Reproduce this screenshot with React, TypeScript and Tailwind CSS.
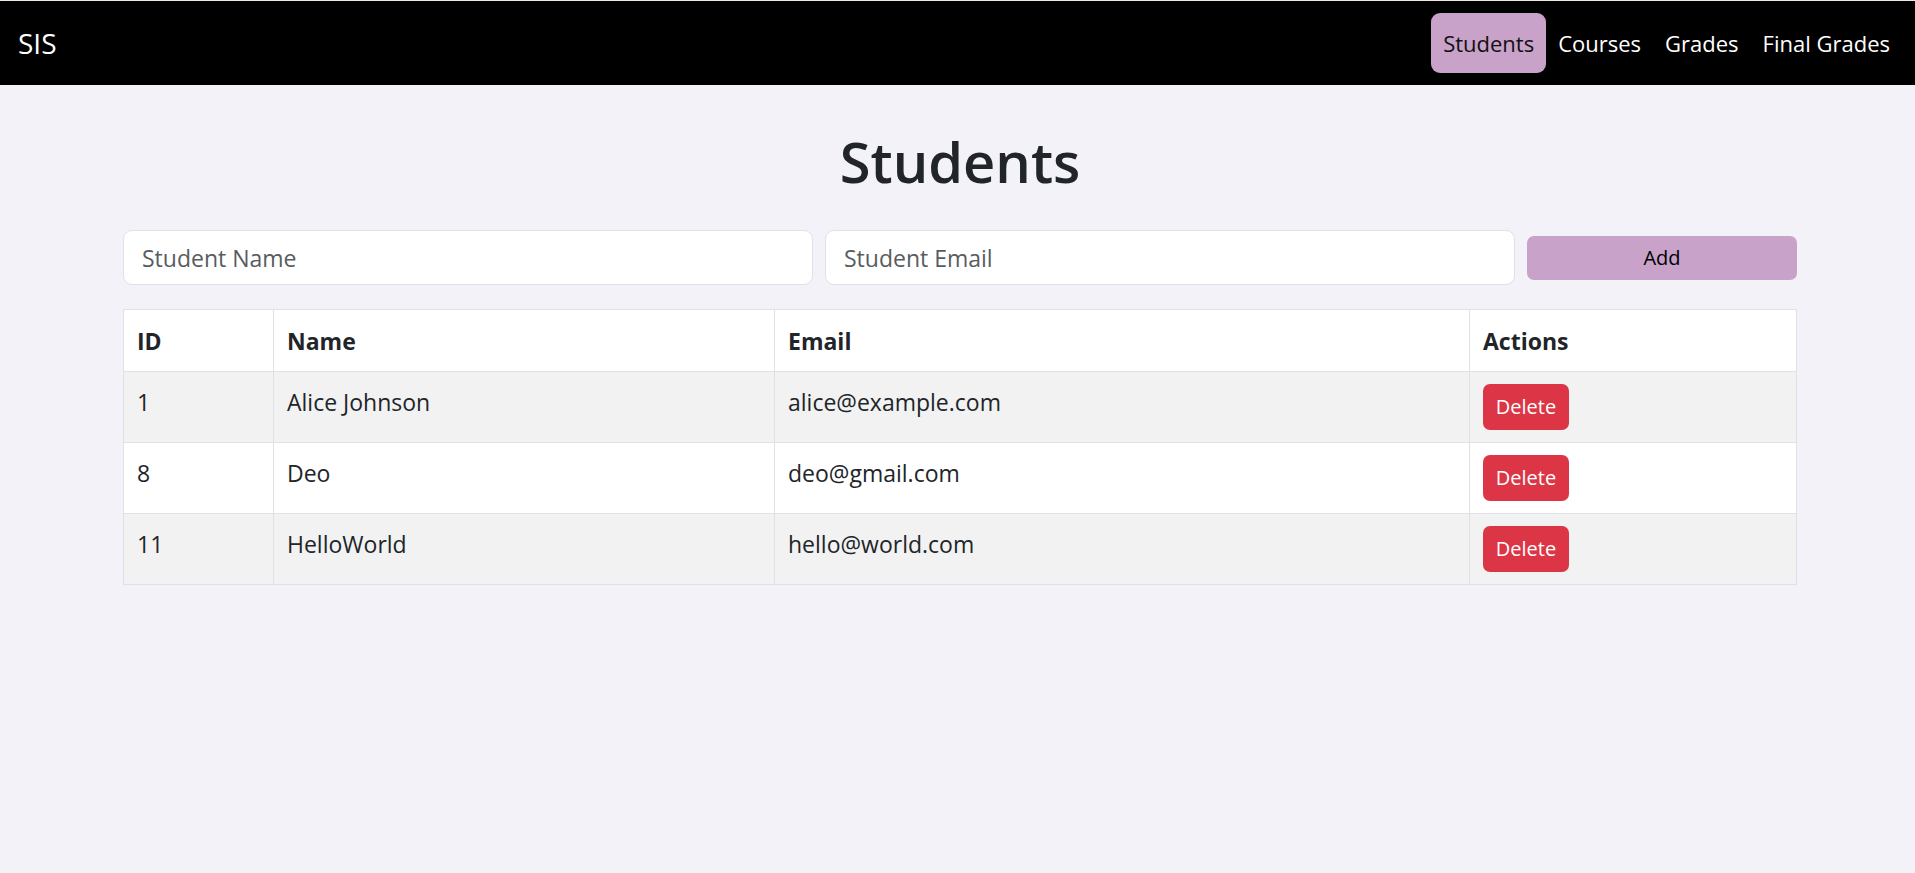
import React from "react";

const students = [
  { id: 1, name: "Alice Johnson", email: "alice@example.com" },
  { id: 8, name: "Deo", email: "deo@gmail.com" },
  { id: 11, name: "HelloWorld", email: "hello@world.com" },
];

export default function App() {
  return (
    <div className="min-h-[873px] bg-[#f3f2f8] font-['Open_Sans','Noto_Sans',sans-serif] text-[#212529]">
      <nav className="h-[85px] border-t border-[#f3e6de] bg-black pl-[18px] pr-[13px] flex items-center justify-between">
        <span className="text-[28px] leading-[36px] text-white">SIS</span>
        <ul className="flex items-center text-[22px] leading-[36px]">
          <li className="px-[12px] py-[12px] rounded-[9px] bg-[#c8a2c8] text-[#111]">Students</li>
          <li className="px-[12px] py-[12px] text-white">Courses</li>
          <li className="px-[12px] py-[12px] text-white">Grades</li>
          <li className="px-[12px] py-[12px] text-white">Final Grades</li>
        </ul>
      </nav>

      <main className="ml-[123px] w-[1674px]">
        <h1 className="mt-[40px] mb-[33px] text-center text-[56px] leading-[72px] font-semibold">Students</h1>

        <div className="grid grid-cols-[690px_690px_1fr] gap-[12px] items-center mb-[24px]">
          <input
            className="h-[55px] rounded-[9px] border border-[#dee2e6] bg-white px-[18px] text-[23px] outline-none placeholder:text-[#595c5f]"
            placeholder="Student Name"
          />
          <input
            className="h-[55px] rounded-[9px] border border-[#dee2e6] bg-white px-[18px] text-[23px] outline-none placeholder:text-[#595c5f]"
            placeholder="Student Email"
          />
          <button className="h-[44px] rounded-[7px] bg-[#c8a2c8] text-[20px] text-black">Add</button>
        </div>

        <table className="w-full table-fixed border-collapse text-[23px] leading-[36px]">
          <thead>
            <tr className="bg-white">
              <th className="w-[150px] border border-[#dee2e6] px-[13px] py-[12.5px] text-left font-bold">ID</th>
              <th className="w-[501px] border border-[#dee2e6] px-[13px] py-[12.5px] text-left font-bold">Name</th>
              <th className="w-[695px] border border-[#dee2e6] px-[13px] py-[12.5px] text-left font-bold">Email</th>
              <th className="border border-[#dee2e6] px-[13px] py-[12.5px] text-left font-bold">Actions</th>
            </tr>
          </thead>
          <tbody>
            {students.map((s, i) => (
              <tr key={s.id} className={i % 2 === 0 ? "bg-[#f2f2f2]" : "bg-white"}>
                <td className="border border-[#dee2e6] px-[13px] py-[12px] align-top">{s.id}</td>
                <td className="border border-[#dee2e6] px-[13px] py-[12px] align-top">{s.name}</td>
                <td className="border border-[#dee2e6] px-[13px] py-[12px] align-top">{s.email}</td>
                <td className="border border-[#dee2e6] px-[13px] py-[12px] align-top">
                  <button className="h-[46px] w-[86px] rounded-[7px] bg-[#dc3545] text-[20px] text-white block">Delete</button>
                </td>
              </tr>
            ))}
          </tbody>
        </table>
      </main>
    </div>
  );
}
